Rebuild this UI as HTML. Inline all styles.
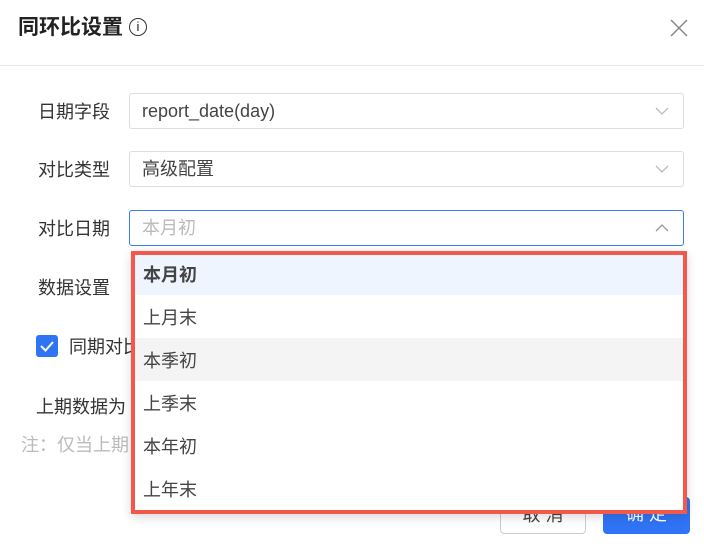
<!DOCTYPE html>
<html><head><meta charset="utf-8"><style>
*{margin:0;padding:0;box-sizing:border-box}
body{width:704px;height:550px;background:#fff;font-family:"Liberation Sans","Noto Sans CJK SC",sans-serif;color:#333;position:relative;overflow:hidden}
.abs{position:absolute}
.title{left:18px;top:14px;font-size:21px;font-weight:bold;color:#222;line-height:28px}
.info{display:inline-block;width:18px;height:18px;border:1.3px solid #333;border-radius:50%;font-size:13px;text-align:center;line-height:16px;font-weight:normal;vertical-align:3px;margin-left:6px}
.hr{left:0;top:65px;width:704px;height:1px;background:#e8e8e8}
.lbl{font-size:18px;color:#333;line-height:22px}
.inp{left:129px;width:555px;height:36px;border:1px solid #ddd;border-radius:3px;font-size:18px;line-height:34px;padding-left:12px;color:#444}
.chev{position:absolute;right:14px;top:12px}
.dd{left:131px;top:251px;width:556px;height:263px;border:4px solid #f4584a;background:#fff;box-shadow:0 3px 10px rgba(0,0,0,.15)}
.it{height:43px;font-size:18px;line-height:40px;padding-left:8px;color:#444}
.btn{height:37px;border-radius:4px;font-size:18px;text-align:center;line-height:35px}
</style></head><body>
<div class="abs title">同环比设置<span class="info">i</span></div>
<svg class="abs" style="left:670px;top:19px" width="18" height="18" viewBox="0 0 18 18"><path d="M1 1L17 17M17 1L1 17" stroke="#888" stroke-width="1.5"/></svg>
<div class="abs hr"></div>
<div class="abs lbl" style="left:38px;top:101px">日期字段</div>
<div class="abs inp" style="top:93px">report_date(day)<svg class="chev" width="14" height="10" viewBox="0 0 14 10"><path d="M1 2L7 8L13 2" fill="none" stroke="#bbb" stroke-width="1.3"/></svg></div>
<div class="abs lbl" style="left:38px;top:159px">对比类型</div>
<div class="abs inp" style="top:151px">高级配置<svg class="chev" width="14" height="10" viewBox="0 0 14 10"><path d="M1 2L7 8L13 2" fill="none" stroke="#bbb" stroke-width="1.3"/></svg></div>
<div class="abs lbl" style="left:38px;top:218px">对比日期</div>
<div class="abs inp" style="top:210px;border-color:#3a7ef0;color:#bbb">本月初<svg class="chev" width="14" height="10" viewBox="0 0 14 10"><path d="M1 8L7 2L13 8" fill="none" stroke="#999" stroke-width="1.3"/></svg></div>
<div class="abs lbl" style="left:38px;top:277px">数据设置</div>
<div class="abs" style="left:36px;top:335px;width:22px;height:22px;background:#2f74f5;border-radius:3px"><svg width="22" height="22" viewBox="0 0 22 22"><path d="M5 11L9.5 15.5L17 7" fill="none" stroke="#fff" stroke-width="2"/></svg></div>
<div class="abs lbl" style="left:69px;top:336px">同期对比</div>
<div class="abs lbl" style="left:36px;top:396px">上期数据为</div>
<div class="abs lbl" style="left:21px;top:434px;color:#bbb">注：仅当上期</div>
<div class="abs btn" style="left:500px;top:497px;width:86px;border:1px solid #ccc;color:#444">取 消</div>
<div class="abs btn" style="left:603px;top:497px;width:87px;background:#2f74f5;color:#fff">确 定</div>
<div class="abs dd">
<div class="it" style="background:#eef5ff;font-weight:bold;height:40px">本月初</div>
<div class="it" style="line-height:46px">上月末</div>
<div class="it" style="background:#f4f4f4;line-height:46px">本季初</div>
<div class="it" style="line-height:46px">上季末</div>
<div class="it" style="line-height:46px">本年初</div>
<div class="it" style="line-height:46px">上年末</div>
</div>
</body></html>
